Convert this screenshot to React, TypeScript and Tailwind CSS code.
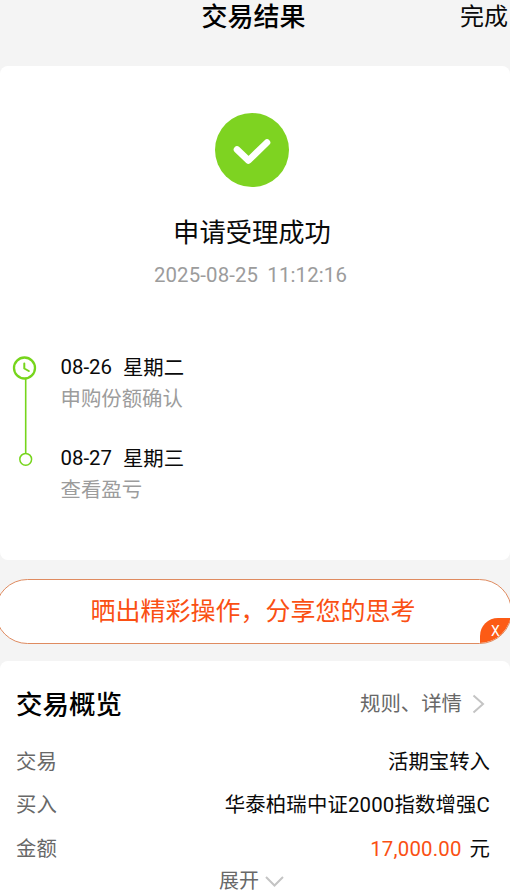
type Step = {
  date: string;
  weekday: string;
  label: string;
};

const steps: readonly Step[] = [
  { date: "08-26", weekday: "星期二", label: "申购份额确认" },
  { date: "08-27", weekday: "星期三", label: "查看盈亏" }
];

function SuccessIcon() {
  return (
    <svg width="74" height="74" viewBox="0 0 74 74" fill="none" aria-hidden>
      <circle cx="37" cy="37" r="37" fill="#7ed321" />
      <path d="M22 36.5 L33.5 47.5 L52 29.5" stroke="white" strokeWidth="6.6" strokeLinecap="round" strokeLinejoin="round" />
    </svg>
  );
}

function Timeline() {
  return (
    <svg width="26" height="112" viewBox="0 0 26 112" fill="none" stroke="#76d51c" aria-hidden>
      <circle cx="12.5" cy="13" r="10.5" strokeWidth="2.3" />
      <path d="M12.3 8.5 V13.5 L16.8 16" strokeWidth="2" strokeLinecap="round" strokeLinejoin="round" />
      <path d="M13.7 24 V98" strokeWidth="1.6" />
      <circle cx="13.7" cy="104.3" r="5.9" strokeWidth="1.5" />
    </svg>
  );
}

function Row({ label, children }: { label: string; children: React.ReactNode }) {
  return (
    <div className="flex h-[43.5px] items-center justify-between">
      <span className="text-[#686868]">{label}</span>
      <span className="text-[#0a0a0a]">{children}</span>
    </div>
  );
}

export default function App() {
  return (
    <div className="flex h-[890px] w-[510px] flex-col overflow-hidden bg-[#f4f4f4] font-[Roboto,'Noto_Sans_CJK_SC',sans-serif] text-[20.4px] text-[#0a0a0a]">
      <header className="grid h-[66px] shrink-0 grid-cols-[1fr_auto_1fr] items-start px-0.5 pt-px leading-8">
        <span />
        <h1 className="-ml-[3px] text-[26px] font-medium leading-8 text-black">交易结果</h1>
        <span className="text-right text-2xl leading-8">完成</span>
      </header>

      {/* Result */}
      <section className="h-[494px] shrink-0 rounded-lg bg-white pt-[47px]">
        <div className="flex flex-col items-center pr-[6px]">
          <SuccessIcon />
          <h2 className="mt-7 text-[26.3px] leading-9">申请受理成功</h2>
          <p className="mt-[10px] pr-[3px] text-[20.4px] leading-7 tracking-[0.13px] text-[#9c9c9c] [word-spacing:4px]">2025-08-25 11:12:16</p>
        </div>

        <div className="mt-[66px] flex pl-3">
          <Timeline />
          <ul className="-mt-[3px] flex flex-col gap-[29px] pl-[22.5px]">
            {steps.map((step) => (
              <li key={step.date} className="leading-[30px]">
                <p className="flex gap-[11px]">
                  <span>{step.date}</span>
                  <span className="pt-px leading-[30px]">{step.weekday}</span>
                </p>
                <p className="pt-px text-[#9c9c9c]">{step.label}</p>
              </li>
            ))}
          </ul>
        </div>
      </section>

      {/* Share banner */}
      <section className="relative -ml-[5px] -mr-[2px] mt-[19px] flex h-[65px] shrink-0 items-center justify-center overflow-hidden rounded-full border border-[#df8b60] bg-white pr-px text-[25px] text-[#fa5013]">
        晒出精彩操作，分享您的思考
        <button className="absolute -bottom-px -right-px flex h-[26px] w-[32px] items-center rounded-tl-[18px] bg-[#fc5b15] pl-[11px] text-[14px] text-white">
          X
        </button>
      </section>

      {/* Overview */}
      <section className="mt-[17px] h-[229px] shrink-0 rounded-t-lg bg-white px-4 pr-5 pt-[25.5px]">
        <div className="flex h-9 items-center justify-between">
          <h2 className="text-[26.5px] font-medium text-black">交易概览</h2>
          <div className="flex items-center gap-[10px] pr-[5px] text-[#686868]">
            规则、详情
            <svg width="13" height="20" viewBox="0 0 13 20" fill="none" stroke="#c4c4c4" strokeWidth="2" aria-hidden>
              <path d="M1.5 1.5 L11 10 L1.5 18.5" />
            </svg>
          </div>
        </div>
        <div className="mt-[18px]">
          <Row label="交易">活期宝转入</Row>
          <Row label="买入">
            <span className="tracking-[0.15px]">华泰柏瑞中证2000指数增强C</span>
          </Row>
          <Row label="金额">
            <span className="mr-[8px] tracking-[0.2px] text-[#fa5013]">17,000.00</span>元
          </Row>
        </div>
        <div className="mt-0.5 flex h-4 items-center justify-center gap-1.5 pr-[3px] text-[20px] leading-4 text-[#686868]">
          展开
          <svg width="19" height="11" viewBox="0 0 19 11" fill="none" stroke="#c4c4c4" strokeWidth="2" aria-hidden>
            <path d="M1 1 L9.5 9.5 L18 1" />
          </svg>
        </div>
      </section>
    </div>
  );
}
